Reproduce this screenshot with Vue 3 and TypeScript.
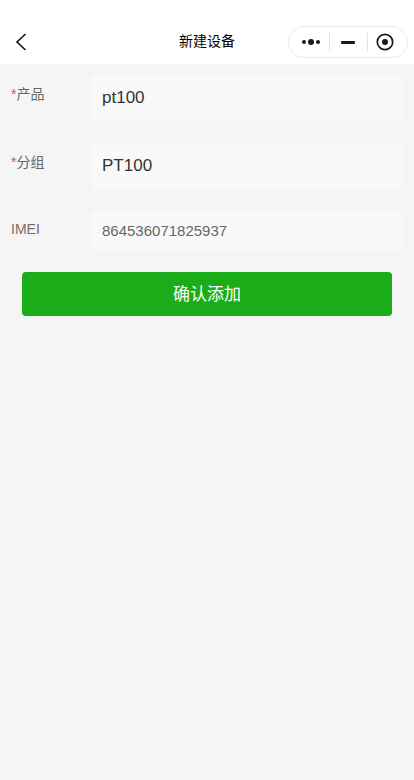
<script setup lang="ts">
interface Field {
  key: string
  label: string
  required: boolean
  value: string
  small: boolean
}
const fields: Field[] = [
  { key: 'product', label: '产品', required: true, value: 'pt100', small: false },
  { key: 'group', label: '分组', required: true, value: 'PT100', small: false },
  { key: 'imei', label: 'IMEI', required: false, value: '864536071825937', small: true },
]
</script>

<template>
  <div class="page">
    <header class="nav">
      <svg class="back" width="12" height="18" viewBox="0 0 12 18" fill="none">
        <path d="M10.5 1 L2 9 L10.5 17" stroke="#111" stroke-width="1.6" />
      </svg>
      <span class="title">新建设备</span>
      <div class="capsule">
        <svg class="dots" width="20" height="8" viewBox="0 0 20 8">
          <circle cx="3" cy="4" r="2" fill="#1a1a1a" />
          <circle cx="10" cy="4" r="3" fill="#1a1a1a" />
          <circle cx="17" cy="4" r="2" fill="#1a1a1a" />
        </svg>
        <i class="sep"></i>
        <i class="minus"></i>
        <i class="sep"></i>
        <svg class="record" width="18" height="18" viewBox="0 0 18 18">
          <circle cx="9" cy="9" r="7.7" fill="none" stroke="#1a1a1a" stroke-width="1.7" />
          <circle cx="9" cy="9" r="3" fill="#1a1a1a" />
        </svg>
      </div>
    </header>

    <main class="form">
      <div v-for="f in fields" :key="f.key" class="row">
        <div class="label" :class="{ 'label-plain': !f.required }">
          <span v-if="f.required" class="star">*</span>{{ f.label }}
        </div>
        <div class="field" :class="{ small: f.small }">{{ f.value }}</div>
      </div>
      <button class="submit" type="button">确认添加</button>
    </main>
  </div>
</template>

<style>
html, body { margin: 0; background: #f5f5f5; }
</style>

<style scoped>
.page {
  width: 414px;
  height: 780px;
  background: #f5f5f5;
  font-family: "Liberation Sans", Arial, "Noto Sans CJK SC", sans-serif;
  overflow: hidden;
}
.nav {
  position: relative;
  height: 64px;
  background: #fff;
  display: flex;
  align-items: flex-end;
  justify-content: center;
}
.back { position: absolute; left: 15px; top: 33px; }
.title {
  font-size: 14px;
  line-height: 20px;
  color: #000;
  margin-bottom: 13px;
}
.capsule {
  position: absolute;
  left: 288px;
  top: 26px;
  width: 120px;
  height: 32px;
  box-sizing: border-box;
  border: 1px solid #e8e8e8;
  border-radius: 16px;
  display: flex;
  align-items: center;
  padding-left: 12px;
}
.dots { margin-right: 7.5px; }
.sep { width: 1.5px; height: 18px; background: #e2e2e2; }
.minus { width: 14px; height: 3px; background: #1a1a1a; margin: 0 11.5px 0 11px; border-radius: 1px; }
.record { margin-left: 8px; }
.form { padding: 11px 11px 0; }
.row { display: flex; align-items: flex-start; margin-bottom: 22px; }
.label {
  width: 80px;
  flex: none;
  font-size: 14px;
  line-height: 20px;
  padding-top: 9px;
  color: #666;
}
.label-plain { color: #7a6a6a; padding-top: 8px; }
.star { color: #d9534f; }
.field {
  flex: 1;
  height: 46px;
  line-height: 46px;
  box-sizing: border-box;
  padding-left: 11px;
  background: #f9f9f9;
  border-radius: 6px;
  font-size: 17px;
  color: #333;
}
.field.small {
  height: 39px;
  line-height: 40px;
  font-size: 15px;
  color: #666;
}
.submit {
  display: block;
  width: 370px;
  height: 44px;
  margin: 0 0 0 11px;
  padding: 0 0 4px;
  border: 0;
  border-radius: 4px;
  background: #1aad19;
  color: #fff;
  font-family: inherit;
  font-size: 17px;
}
</style>
